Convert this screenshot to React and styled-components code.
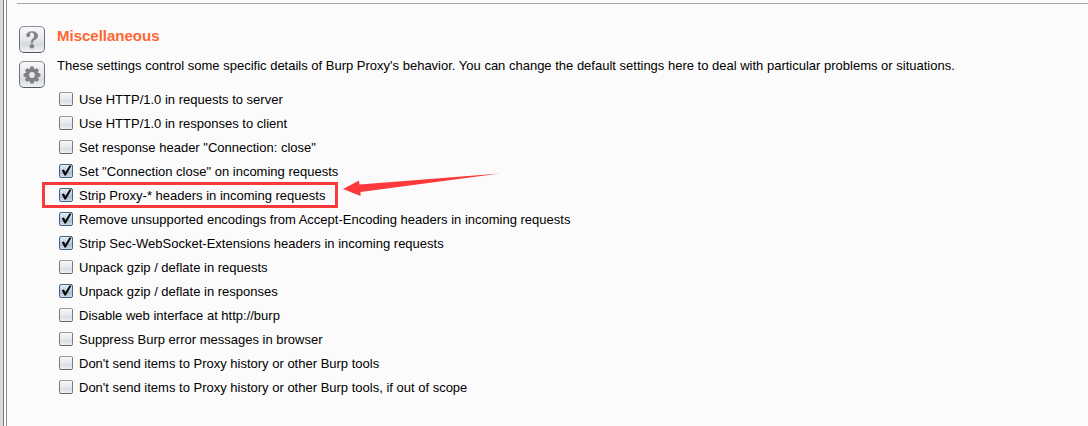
import React from "react";
import styled, { createGlobalStyle } from "styled-components";

const GlobalStyle = createGlobalStyle`
  * { box-sizing: border-box; }
  html, body, #root { height: 100%; }
  body {
    margin: 0;
    background: #fbfbfb;
    color: #000;
    font-family: "Liberation Sans", Arial, sans-serif;
    font-size: 13px;
    line-height: 16px;
  }
`;

const Window = styled.div`
  display: flex;
  min-height: 100%;
`;

const Divider = styled.div`
  flex: none;
  width: 7px;
  background: linear-gradient(to right, #dcdad6 3px, #7b7b7b 3px 4px, #fff 4px 6px, #8b929c 6px);
`;

const Panel = styled.main`
  flex: 1;
  min-width: 0;
  padding: 3px 0 0 10px;
`;

const Section = styled.section`
  display: flex;
  gap: 12px;
  padding: 22px 0 0 2px;
  border-top: 1px solid #a8a8ab;
`;

const Tools = styled.div`
  display: flex;
  flex: none;
  flex-direction: column;
  gap: 8px;
`;

const ToolButton = styled.button`
  display: flex;
  align-items: center;
  justify-content: center;
  width: 26px;
  height: 27px;
  padding: 0;
  border: 1px solid #6c727b;
  border-top-color: #8c9096;
  border-bottom-color: #4f555e;
  border-radius: 5px;
  background: linear-gradient(#f8f9fb, #e6e8ec 50%, #d6dae1 70%, #eff1f4);
`;

const Content = styled.div`
  flex: 1;
  min-width: 0;
`;

const Title = styled.h2`
  margin: 1px 0 0;
  color: #ff6633;
  font-size: 15px;
  line-height: 18px;
`;

const Description = styled.p`
  margin: 13px 0 14px;
`;

const Options = styled.ul`
  display: flex;
  flex-direction: column;
  align-items: flex-start;
  margin: 0;
  padding: 0 0 0 2px;
  list-style: none;
`;

const Option = styled.li`
  position: relative;
`;

const OptionLabel = styled.label`
  display: flex;
  align-items: center;
  gap: 6px;
  height: 24px;
`;

const CheckArea = styled.span`
  display: grid;
  flex: none;
  width: 14px;
  height: 14px;
  margin-bottom: 2px;

  > * { grid-area: 1 / 1; }
`;

const Check = styled.input`
  appearance: none;
  width: 14px;
  height: 14px;
  margin: 0;
  border: 1px solid #777c85;
  border-top-color: #96989d;
  border-bottom-color: #5f656e;
  border-radius: 2px;
  background: linear-gradient(#f8f9fa, #e4e6ea 55%, #d9dce2 65%, #eff1f4);

  &:checked {
    border-color: #49647f;
    background: linear-gradient(#e6eef5, #b9cad9 55%, #abbfd0 65%, #cfdde8);
  }

  & + svg { visibility: hidden; pointer-events: none; }
  &:checked + svg { visibility: visible; }
`;

const Highlight = styled.span`
  position: absolute;
  inset: -2px -13px 0 -17px;
  border: 3px solid #fd3a3b;
  pointer-events: none;
`;

const Arrow = styled.svg`
  position: absolute;
  top: -12px;
  left: calc(100% + 18px);
  pointer-events: none;
`;

const options = [
  { text: "Use HTTP/1.0 in requests to server" },
  { text: "Use HTTP/1.0 in responses to client" },
  { text: 'Set response header "Connection: close"' },
  { text: 'Set "Connection close" on incoming requests', on: true },
  { text: "Strip Proxy-* headers in incoming requests", on: true, marked: true },
  { text: "Remove unsupported encodings from Accept-Encoding headers in incoming requests", on: true },
  { text: "Strip Sec-WebSocket-Extensions headers in incoming requests", on: true },
  { text: "Unpack gzip / deflate in requests" },
  { text: "Unpack gzip / deflate in responses", on: true },
  { text: "Disable web interface at http://burp" },
  { text: "Suppress Burp error messages in browser" },
  { text: "Don't send items to Proxy history or other Burp tools" },
  { text: "Don't send items to Proxy history or other Burp tools, if out of scope" },
];

function HelpIcon() {
  return (
    <svg width="18" height="20" viewBox="0 0 18 20" aria-hidden="true">
      <g fill="#808080" stroke="#808080" strokeWidth="0.4">
        <path d="M3.5 5.2C3.8 2.6 6.2 1.4 8.8 1.4C12.4 1.4 14.8 3.1 14.8 5.8C14.8 8.2 13.2 9.2 11.5 10C10.2 10.7 9.9 11.2 9.8 12.9H8.1C8 10.8 8.5 9.9 9.8 8.8C10.9 7.9 11.3 7.1 11.3 5.8C11.3 3.7 10.3 2.5 8.8 2.5C7.8 2.5 6.9 2.9 6.7 3.5C6.6 4 7.1 4.4 7 5.3C6.9 6.3 6.2 6.9 5.2 6.9C4.2 6.9 3.4 6.2 3.5 5.2Z" />
        <circle cx="8.9" cy="16.2" r="2.1" />
      </g>
    </svg>
  );
}

function GearIcon() {
  return (
    <svg width="18" height="18" viewBox="-9 -9 18 18" aria-hidden="true">
      <g fill="#808080">
        {[0, 45, 90, 135].map((angle) => (
          <path key={angle} d="M-2.2-6L-1.6-8.4H1.6L2.2-6V6L1.6 8.4H-1.6L-2.2 6Z" transform={`rotate(${angle})`} />
        ))}
        <circle r="6.4" />
      </g>
      <circle r="2.9" fill="#e4e6ea" />
    </svg>
  );
}

function OptionRow({ text, on, marked }) {
  return (
    <Option>
      <OptionLabel>
        <CheckArea>
          <Check type="checkbox" defaultChecked={on} />
          <svg width="14" height="14" viewBox="0 0 14 14" aria-hidden="true">
            <path d="M2.8 6.2L5 5.6L6.3 8.2L10.4 1.6H12.6L7 11.5H5.4Z" fill="#080b0e" />
          </svg>
        </CheckArea>
        {text}
      </OptionLabel>
      {marked && (
        <>
          <Highlight />
          <Arrow width="158" height="26" viewBox="0 0 158 26" aria-hidden="true">
            <path d="M0 17L16 8.5L16.5 12.5L157 1.5L17.5 20L17.5 24Z" fill="#fd3a3b" />
          </Arrow>
        </>
      )}
    </Option>
  );
}

export default function App() {
  return (
    <>
      <GlobalStyle />
      <Window>
        <Divider />
        <Panel>
          <Section>
            <Tools>
              <ToolButton type="button" aria-label="Help"><HelpIcon /></ToolButton>
              <ToolButton type="button" aria-label="Options"><GearIcon /></ToolButton>
            </Tools>
            <Content>
              <Title>Miscellaneous</Title>
              <Description>
                These settings control some specific details of Burp Proxy's behavior. You can change the default settings here to deal with particular problems or situations.
              </Description>
              <Options>
                {options.map((option) => <OptionRow key={option.text} {...option} />)}
              </Options>
            </Content>
          </Section>
        </Panel>
      </Window>
    </>
  );
}
